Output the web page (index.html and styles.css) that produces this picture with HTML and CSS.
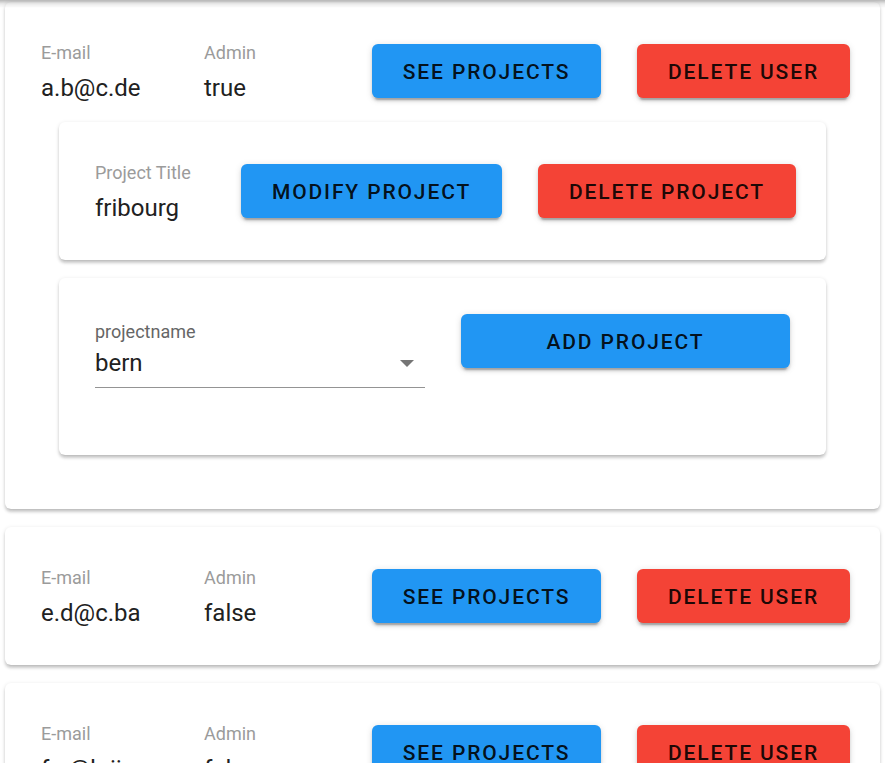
FILE: index.html
```html
<!DOCTYPE html>
<html lang="en">
<head>
<meta charset="utf-8">
<title>Users</title>
<link rel="stylesheet" href="styles.css">
</head>
<body>
<div class="top-shadow"></div>
<main class="list">
  <section class="card">
    <div class="user-row">
      <div class="field col-email"><div class="label">E-mail</div><div class="value">a.b@c.de</div></div>
      <div class="field col-admin"><div class="label">Admin</div><div class="value">true</div></div>
      <button class="btn btn-blue w-see">SEE PROJECTS</button>
      <button class="btn btn-red w-del">DELETE USER</button>
    </div>
    <div class="projects">
      <div class="inner-card">
        <div class="project-row">
          <div class="field col-title"><div class="label">Project Title</div><div class="value">fribourg</div></div>
          <button class="btn btn-blue w-mod">MODIFY PROJECT</button>
          <button class="btn btn-red w-delp">DELETE PROJECT</button>
        </div>
      </div>
      <div class="inner-card add-card">
        <div class="add-row">
          <div class="select-field">
            <div class="select-label">projectname</div>
            <div class="select-value"><span>bern</span><span class="arrow"></span></div>
          </div>
          <button class="btn btn-blue w-add">ADD PROJECT</button>
        </div>
      </div>
    </div>
  </section>
  <section class="card">
    <div class="user-row">
      <div class="field col-email"><div class="label">E-mail</div><div class="value">e.d@c.ba</div></div>
      <div class="field col-admin"><div class="label">Admin</div><div class="value">false</div></div>
      <button class="btn btn-blue w-see">SEE PROJECTS</button>
      <button class="btn btn-red w-del">DELETE USER</button>
    </div>
  </section>
  <section class="card">
    <div class="user-row">
      <div class="field col-email"><div class="label">E-mail</div><div class="value">f.a@b.ij</div></div>
      <div class="field col-admin"><div class="label">Admin</div><div class="value">false</div></div>
      <button class="btn btn-blue w-see">SEE PROJECTS</button>
      <button class="btn btn-red w-del">DELETE USER</button>
    </div>
  </section>
</main>
</body>
</html>
```
FILE: styles.css
```css
html, body {
  margin: 0;
  padding: 0;
  background: #fff;
  font-family: Roboto, "Liberation Sans", sans-serif;
  color: #212121;
}
.top-shadow {
  position: fixed;
  top: 0;
  left: 0;
  right: 0;
  height: 8px;
  background: linear-gradient(to bottom, rgba(0,0,0,0.28), rgba(0,0,0,0.08) 50%, rgba(0,0,0,0));
  pointer-events: none;
  z-index: 5;
}
.list {
  display: flex;
  flex-direction: column;
  gap: 18px;
  padding: 2px 5px 40px;
}
.card, .inner-card {
  background: #fff;
  border-radius: 6px;
  box-shadow: 0 3px 1.5px -3px rgba(0,0,0,0.2), 0 3px 3px 0 rgba(0,0,0,0.14), 0 1.5px 4.5px 0 rgba(0,0,0,0.12);
}
.card {
  padding: 37px 0;
}
.user-row {
  display: flex;
  align-items: center;
  height: 64px;
  padding: 0 30px 0 36px;
}
.field {
  display: flex;
  flex-direction: column;
  flex: none;
  padding-top: 3px;
}
.label {
  font-size: 18px;
  line-height: 27px;
  color: #9b9b9b;
  margin-bottom: 4px;
}
.value {
  font-size: 24px;
  line-height: 36px;
  color: #212121;
}
.col-email { width: 163px; }
.col-admin { width: 168px; }
.col-title { width: 146px; }
.btn {
  height: 54px;
  border: none;
  border-radius: 6px;
  font-family: Roboto, "Liberation Sans", sans-serif;
  font-size: 21px;
  font-weight: 500;
  letter-spacing: 1.875px;
  color: rgba(0,0,0,0.9);
  padding: 2px 0 0;
  line-height: 52px;
  box-shadow: 0 4.5px 1.5px -3px rgba(0,0,0,0.2), 0 3px 3px 0 rgba(0,0,0,0.14), 0 1.5px 7.5px 0 rgba(0,0,0,0.12);
  flex: none;
}
.btn-blue { background: #2196f3; }
.btn-red { background: #f44336; }
.w-see { width: 229px; margin-right: 36px; }
.w-del { width: 213px; }
.w-mod { width: 261px; margin-right: 36px; }
.w-delp { width: 258px; }
.w-add { width: 329px; }
.projects {
  display: flex;
  flex-direction: column;
  gap: 18px;
  padding: 19px 54px 17px;
}
.inner-card {
  padding: 37px 30px 37px 36px;
}
.project-row {
  display: flex;
  align-items: center;
  height: 64px;
}
.add-card {
  padding: 36px 36px;
}
.add-row {
  display: flex;
  align-items: flex-start;
  gap: 36px;
}
.select-field {
  width: 330px;
  flex: none;
  padding: 4px 0 31px;
}
.select-label {
  font-size: 18px;
  line-height: 27px;
  color: #666;
}
.select-value {
  display: flex;
  align-items: center;
  justify-content: space-between;
  font-size: 24px;
  line-height: 36px;
  color: #212121;
  padding-bottom: 6px;
  border-bottom: 1px solid #949494;
}
.arrow {
  width: 0;
  height: 0;
  border-left: 7.5px solid transparent;
  border-right: 7.5px solid transparent;
  border-top: 7.5px solid #757575;
  margin-right: 11px;
}
```
